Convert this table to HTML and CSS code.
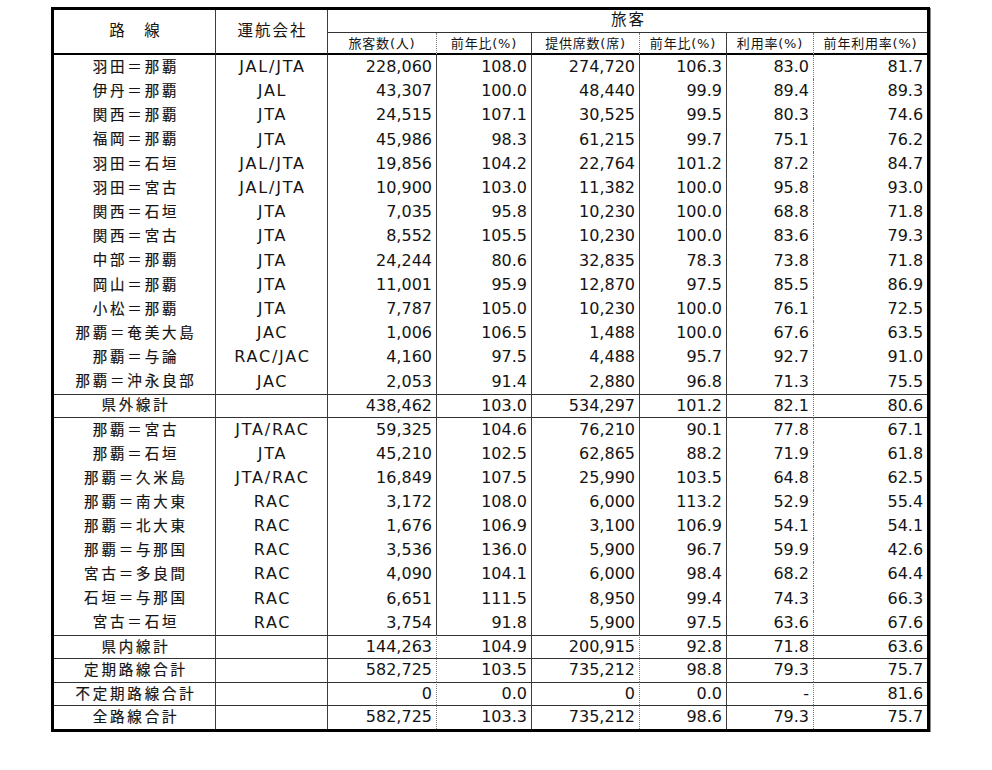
FILE: index.html
```html
<!DOCTYPE html>
<html lang="ja">
<head>
<meta charset="utf-8">
<title>路線別旅客実績</title>
<link rel="stylesheet" href="styles.css">
</head>
<body>
<table class="tbl">
  <colgroup>
    <col class="w1"><col class="w2"><col class="w3"><col class="w4"><col class="w5"><col class="w6"><col class="w7"><col class="w8">
  </colgroup>
  <thead>
    <tr class="h1">
      <th rowspan="2" class="hr">路　線</th>
      <th rowspan="2" class="hc">運航会社</th>
      <th colspan="6" class="hg">旅客</th>
    </tr>
    <tr class="h2">
      <th class="dot">旅客数(人)</th>
      <th>前年比(%)</th>
      <th class="dot">提供席数(席)</th>
      <th>前年比(%)</th>
      <th class="dot">利用率(%)</th>
      <th class="last">前年利用率(%)</th>
    </tr>
  </thead>
  <tbody class="s1">
    <tr><td class="r">羽田＝那覇</td><td class="c">JAL/JTA</td><td class="n">228,060</td><td class="n">108.0</td><td class="n">274,720</td><td class="n">106.3</td><td class="n dot">83.0</td><td class="n last">81.7</td></tr>
    <tr><td class="r">伊丹＝那覇</td><td class="c">JAL</td><td class="n">43,307</td><td class="n">100.0</td><td class="n">48,440</td><td class="n">99.9</td><td class="n dot">89.4</td><td class="n last">89.3</td></tr>
    <tr><td class="r">関西＝那覇</td><td class="c">JTA</td><td class="n">24,515</td><td class="n">107.1</td><td class="n">30,525</td><td class="n">99.5</td><td class="n dot">80.3</td><td class="n last">74.6</td></tr>
    <tr><td class="r">福岡＝那覇</td><td class="c">JTA</td><td class="n">45,986</td><td class="n">98.3</td><td class="n">61,215</td><td class="n">99.7</td><td class="n dot">75.1</td><td class="n last">76.2</td></tr>
    <tr><td class="r">羽田＝石垣</td><td class="c">JAL/JTA</td><td class="n">19,856</td><td class="n">104.2</td><td class="n">22,764</td><td class="n">101.2</td><td class="n dot">87.2</td><td class="n last">84.7</td></tr>
    <tr><td class="r">羽田＝宮古</td><td class="c">JAL/JTA</td><td class="n">10,900</td><td class="n">103.0</td><td class="n">11,382</td><td class="n">100.0</td><td class="n dot">95.8</td><td class="n last">93.0</td></tr>
    <tr><td class="r">関西＝石垣</td><td class="c">JTA</td><td class="n">7,035</td><td class="n">95.8</td><td class="n">10,230</td><td class="n">100.0</td><td class="n dot">68.8</td><td class="n last">71.8</td></tr>
    <tr><td class="r">関西＝宮古</td><td class="c">JTA</td><td class="n">8,552</td><td class="n">105.5</td><td class="n">10,230</td><td class="n">100.0</td><td class="n dot">83.6</td><td class="n last">79.3</td></tr>
    <tr><td class="r">中部＝那覇</td><td class="c">JTA</td><td class="n">24,244</td><td class="n">80.6</td><td class="n">32,835</td><td class="n">78.3</td><td class="n dot">73.8</td><td class="n last">71.8</td></tr>
    <tr><td class="r">岡山＝那覇</td><td class="c">JTA</td><td class="n">11,001</td><td class="n">95.9</td><td class="n">12,870</td><td class="n">97.5</td><td class="n dot">85.5</td><td class="n last">86.9</td></tr>
    <tr><td class="r">小松＝那覇</td><td class="c">JTA</td><td class="n">7,787</td><td class="n">105.0</td><td class="n">10,230</td><td class="n">100.0</td><td class="n dot">76.1</td><td class="n last">72.5</td></tr>
    <tr><td class="r">那覇＝奄美大島</td><td class="c">JAC</td><td class="n">1,006</td><td class="n">106.5</td><td class="n">1,488</td><td class="n">100.0</td><td class="n dot">67.6</td><td class="n last">63.5</td></tr>
    <tr><td class="r">那覇＝与論</td><td class="c">RAC/JAC</td><td class="n">4,160</td><td class="n">97.5</td><td class="n">4,488</td><td class="n">95.7</td><td class="n dot">92.7</td><td class="n last">91.0</td></tr>
    <tr><td class="r">那覇＝沖永良部</td><td class="c">JAC</td><td class="n">2,053</td><td class="n">91.4</td><td class="n">2,880</td><td class="n">96.8</td><td class="n dot">71.3</td><td class="n last">75.5</td></tr>
    <tr class="sub"><td class="r">県外線計</td><td class="c"></td><td class="n">438,462</td><td class="n">103.0</td><td class="n">534,297</td><td class="n">101.2</td><td class="n dot">82.1</td><td class="n last">80.6</td></tr>
  </tbody>
  <tbody class="s2">
    <tr><td class="r">那覇＝宮古</td><td class="c">JTA/RAC</td><td class="n">59,325</td><td class="n">104.6</td><td class="n">76,210</td><td class="n">90.1</td><td class="n dot">77.8</td><td class="n last">67.1</td></tr>
    <tr><td class="r">那覇＝石垣</td><td class="c">JTA</td><td class="n">45,210</td><td class="n">102.5</td><td class="n">62,865</td><td class="n">88.2</td><td class="n dot">71.9</td><td class="n last">61.8</td></tr>
    <tr><td class="r">那覇＝久米島</td><td class="c">JTA/RAC</td><td class="n">16,849</td><td class="n">107.5</td><td class="n">25,990</td><td class="n">103.5</td><td class="n dot">64.8</td><td class="n last">62.5</td></tr>
    <tr><td class="r">那覇＝南大東</td><td class="c">RAC</td><td class="n">3,172</td><td class="n">108.0</td><td class="n">6,000</td><td class="n">113.2</td><td class="n dot">52.9</td><td class="n last">55.4</td></tr>
    <tr><td class="r">那覇＝北大東</td><td class="c">RAC</td><td class="n">1,676</td><td class="n">106.9</td><td class="n">3,100</td><td class="n">106.9</td><td class="n dot">54.1</td><td class="n last">54.1</td></tr>
    <tr><td class="r">那覇＝与那国</td><td class="c">RAC</td><td class="n">3,536</td><td class="n">136.0</td><td class="n">5,900</td><td class="n">96.7</td><td class="n dot">59.9</td><td class="n last">42.6</td></tr>
    <tr><td class="r">宮古＝多良間</td><td class="c">RAC</td><td class="n">4,090</td><td class="n">104.1</td><td class="n">6,000</td><td class="n">98.4</td><td class="n dot">68.2</td><td class="n last">64.4</td></tr>
    <tr><td class="r">石垣＝与那国</td><td class="c">RAC</td><td class="n">6,651</td><td class="n">111.5</td><td class="n">8,950</td><td class="n">99.4</td><td class="n dot">74.3</td><td class="n last">66.3</td></tr>
    <tr><td class="r">宮古＝石垣</td><td class="c">RAC</td><td class="n">3,754</td><td class="n">91.8</td><td class="n">5,900</td><td class="n">97.5</td><td class="n dot">63.6</td><td class="n last">67.6</td></tr>
  </tbody>
  <tbody class="s3">
    <tr><td class="r">県内線計</td><td class="c"></td><td class="n dot">144,263</td><td class="n">104.9</td><td class="n dot">200,915</td><td class="n">92.8</td><td class="n dot">71.8</td><td class="n last">63.6</td></tr>
    <tr><td class="r">定期路線合計</td><td class="c"></td><td class="n dot">582,725</td><td class="n">103.5</td><td class="n dot">735,212</td><td class="n">98.8</td><td class="n dot">79.3</td><td class="n last">75.7</td></tr>
    <tr><td class="r">不定期路線合計</td><td class="c"></td><td class="n dot">0</td><td class="n">0.0</td><td class="n dot">0</td><td class="n">0.0</td><td class="n dot">-</td><td class="n last">81.6</td></tr>
    <tr><td class="r">全路線合計</td><td class="c"></td><td class="n dot">582,725</td><td class="n">103.3</td><td class="n dot">735,212</td><td class="n">98.6</td><td class="n dot">79.3</td><td class="n last">75.7</td></tr>
  </tbody>
</table>
</body>
</html>
```

FILE: styles.css
```css
html, body {
  margin: 0;
  padding: 0;
  background: #ffffff;
}

body {
  font-family: "DejaVu Sans", "Noto Sans CJK JP", sans-serif;
  color: #141414;
}

.tbl {
  margin: 7px 0 0 51px;
  width: 879px;
  table-layout: fixed;
  border-collapse: separate;
  border-spacing: 0;
  border: 3px solid #000;
  box-shadow: 1px 1px 0 #8a8a8a;
}

.w1 { width: 162px; }
.w2 { width: 112px; }
.w3 { width: 109px; }
.w4 { width: 95px; }
.w5 { width: 108px; }
.w6 { width: 87px; }
.w7 { width: 87px; }
.w8 { width: 113px; }

.tbl th,
.tbl td {
  box-sizing: border-box;
  padding: 0;
  border-right: 1px solid #3c3c3c;
  line-height: 1;
  white-space: nowrap;
  overflow: hidden;
  vertical-align: middle;
}

.tbl th.last,
.tbl td.last,
.tbl th.hg {
  border-right: none;
}

.tbl th.dot,
.tbl td.dot {
  border-right: 1px dotted #7a7a7a;
}

/* header */
.tbl th {
  font-weight: normal;
  text-align: center;
}

.h1 { height: 23px; }
.h2 { height: 22px; }

.tbl .hr,
.tbl .hc {
  font-size: 15.5px;
  letter-spacing: 2px;
  padding-left: 2px;
  border-bottom: 2px solid #000;
}

.tbl .hg {
  font-size: 15.5px;
  letter-spacing: 2px;
  padding-left: 2px;
  border-bottom: 1px solid #333;
}

.tbl .h2 th {
  font-size: 13px;
  letter-spacing: 0.8px;
  border-bottom: 2px solid #000;
}

/* body cells */
.tbl td.r {
  text-align: center;
  font-size: 14.5px;
  letter-spacing: 2.8px;
  padding-left: 3px;
  -webkit-text-stroke: 0.2px #141414;
}

.tbl td.c {
  text-align: center;
  font-size: 16px;
  letter-spacing: 1.8px;
  padding-left: 2px;
}

.tbl td.n {
  text-align: right;
  font-size: 16px;
  padding-right: 4px;
}

.s1 tr { height: 24.2px; }
.s2 tr { height: 24.1px; }
.s3 tr { height: 23.5px; }

.s1 tr.sub td {
  border-top: 1px solid #333;
  border-bottom: 1px solid #333;
}

.s3 tr td {
  border-top: 1px solid #333;
}
```
